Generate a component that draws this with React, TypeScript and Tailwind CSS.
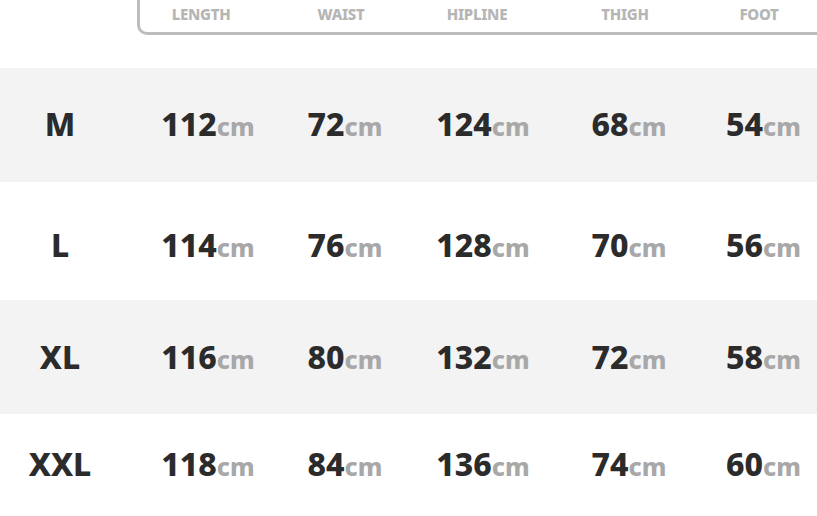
import React from "react";

const rows = [
  { size: "M", vals: ["112", "72", "124", "68", "54"], bg: "bg-[#f4f3f4]", h: "h-[114px]", pad: "pb-[3px]" },
  { size: "L", vals: ["114", "76", "128", "70", "56"], bg: "bg-white", h: "h-[118px]", pad: "pt-[8px]" },
  { size: "XL", vals: ["116", "80", "132", "72", "58"], bg: "bg-[#f4f3f4]", h: "h-[114px]", pad: "" },
  { size: "XXL", vals: ["118", "84", "136", "74", "60"], bg: "bg-white", h: "h-[102px]", pad: "pb-[2px]" },
];

const valueCols = ["w-[176px]", "w-[98px]", "w-[178px]", "w-[114px]", "w-[155px]"];

const headers = [
  { t: "LENGTH", w: "w-[122px]" },
  { t: "WAIST", w: "w-[158px]" },
  { t: "HIPLINE", w: "w-[114px]" },
  { t: "THIGH", w: "w-[182px]" },
  { t: "FOOT", w: "w-[86px]" },
];

export default function App() {
  return (
    <div
      className="w-[817px] h-[516px] overflow-hidden bg-white flex flex-col"
      style={{ fontFamily: '"Noto Sans", "Open Sans", "Liberation Sans", sans-serif' }}
    >
      <div className="h-[68px] flex items-start shrink-0">
        <div className="w-[137px] shrink-0" />
        <div className="h-[35px] flex-1 border-l-[3px] border-b-[3px] border-[#bdbdbd] rounded-bl-[10px] flex items-center pb-[3px]">
          {headers.map((h) => (
            <div
              key={h.t}
              className={`${h.w} shrink-0 flex justify-center text-[15px] font-extrabold text-[#b5b5b5] tracking-[-0.3px] leading-none`}
            >
              {h.t}
            </div>
          ))}
        </div>
      </div>
      {rows.map((r) => (
        <div key={r.size} className={`${r.bg} ${r.h} ${r.pad} shrink-0 flex items-center`}>
          <div className="w-[120px] shrink-0 flex justify-center text-[32px] font-extrabold text-[#2b2b2b] leading-none">
            {r.size}
          </div>
          {r.vals.map((v, i) => (
            <div key={i} className={`${valueCols[i]} shrink-0 flex justify-center items-baseline leading-none`}>
              <span className="text-[32px] font-extrabold text-[#2b2b2b]">{v}</span>
              <span className="text-[25px] font-extrabold text-[#a8a8a8]">cm</span>
            </div>
          ))}
        </div>
      ))}
    </div>
  );
}
